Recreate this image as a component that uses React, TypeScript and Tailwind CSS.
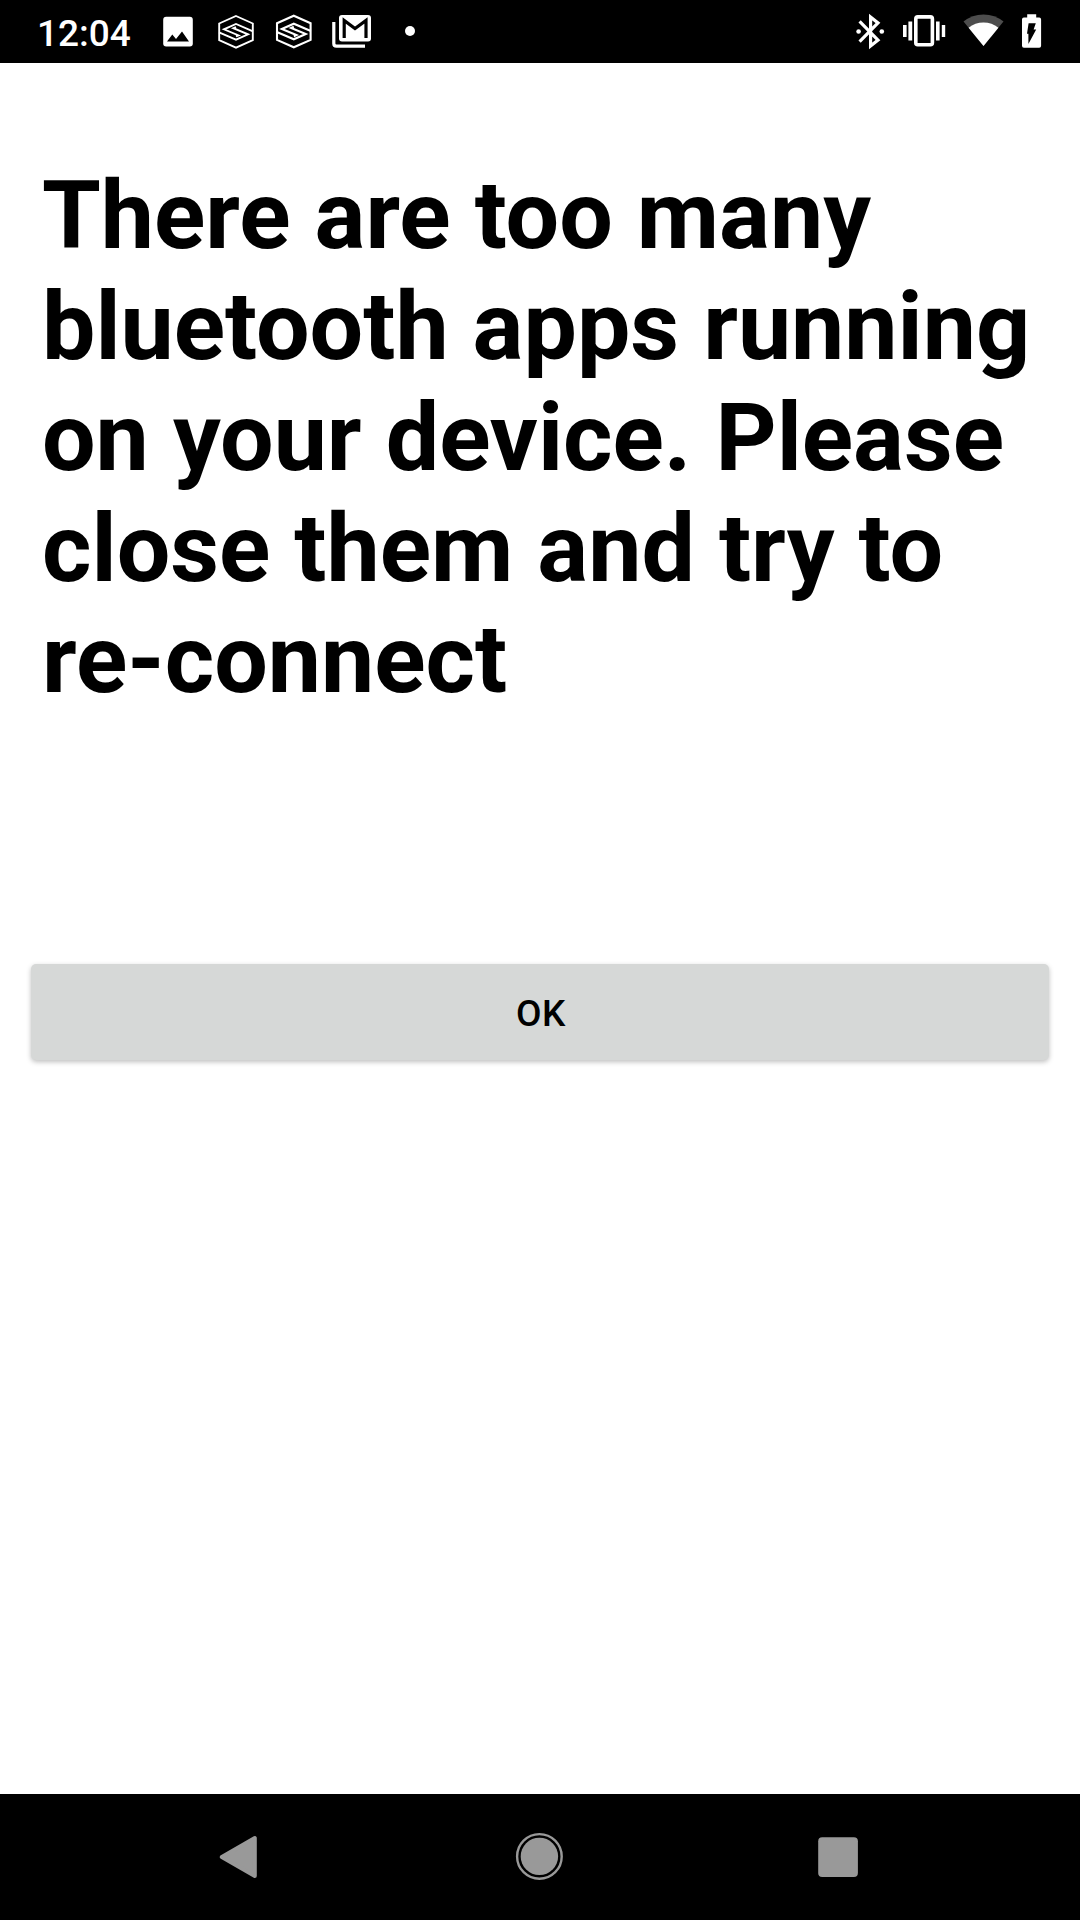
import React from "react";

function HexLogo({ strokeWidth }: { strokeWidth: number }) {
  return (
    <g fill="none" stroke="#fff" strokeWidth={strokeWidth} strokeLinejoin="miter">
      <path d="M18 1.4 34.8 8.9V25.6L18 33 1.2 25.6V8.9Z" />
      <path d="M35 16.7 18 9.4 6 14.7 20.6 20.8 18 21.9M1 17.7 18 25 30 19.7 15.4 13.6 18 12.5" />
    </g>
  );
}

function StatusBar() {
  return (
    <header className="flex h-[63px] shrink-0 items-center bg-black text-white">
      <div className="w-[158px] pl-[37px] pt-[4px] text-[37px] font-medium leading-none">12:04</div>
      <svg className="h-[63px] w-[282px]" viewBox="158 0 282 63">
        <rect x="163.2" y="16.8" width="29.6" height="29.6" rx="3" fill="#fff" />
        <path d="M167 41.5 172.3 34.4 176 39 182 31.6 189 41.5Z" fill="#000" />
        <g transform="translate(218 14.6)">
          <HexLogo strokeWidth={1.9} />
        </g>
        <g transform="translate(275.8 14.3)">
          <HexLogo strokeWidth={2.1} />
        </g>
        <path d="M333.8 22V43.5Q333.8 46.2 336.5 46.2H365" fill="none" stroke="#fff" strokeWidth="3.2" />
        <rect x="339" y="15" width="32" height="26.6" rx="3" fill="#fff" />
        <path d="M344.2 38V20.5L355 28.5 366 20.5V38" fill="none" stroke="#000" strokeWidth="3.2" />
        <circle cx="410" cy="31" r="5" fill="#fff" />
      </svg>
      <svg className="ml-auto h-[63px] w-[240px]" viewBox="840 0 240 63">
        <path d="M859.6 21.4 878 40 870.6 46V17L878 23 859.6 41.6" fill="none" stroke="#fff" strokeWidth="3.2" />
        <circle cx="858.6" cy="31.5" r="2.3" fill="#fff" />
        <circle cx="881.8" cy="31.5" r="2.3" fill="#fff" />
        <rect x="915.8" y="16.9" width="16.6" height="27.8" rx="2" fill="none" stroke="#fff" strokeWidth="3.6" />
        <path d="M903 25h3.6v12H903zM908.4 21.6h3.8v18.8h-3.8zM936 21.6h3.6v18.8H936zM941.8 25h3.4v12h-3.4z" fill="#fff" />
        <path d="M983.5 46 963.5 21.6Q972 14.4 983.5 14.4T1003.5 21.6Z" fill="#4d4d4d" />
        <path d="M983.5 46 968.6 27.8Q975 22.6 983.5 22.6T998.4 27.8Z" fill="#fff" />
        <path d="M1027.2 14.2h9v3.3h3q1.9 0 1.9 1.9v26.4q0 1.9-1.9 1.9h-15.3q-1.9 0-1.9-1.9V19.4q0-1.9 1.9-1.9h3.3z" fill="#fff" />
        <path d="M1028.6 23.2h7.2l-2.2 6.4h2.6l-7.8 14.4V33.8h-1.4z" fill="#000" />
      </svg>
    </header>
  );
}

function NavigationBar() {
  return (
    <nav className="flex h-[126px] shrink-0 items-center bg-black">
      <svg className="h-[126px] w-full" viewBox="0 1794 1080 126">
        <path d="M221.8 1857 254.8 1838V1876Z" fill="#999" stroke="#999" strokeWidth="4" strokeLinejoin="round" />
        <circle cx="539.4" cy="1856.4" r="22.3" fill="none" stroke="#999" strokeWidth="2.4" />
        <circle cx="539.4" cy="1856.4" r="18.7" fill="#999" />
        <rect x="818.2" y="1837.2" width="39.7" height="39.7" rx="4" fill="#999" />
      </svg>
    </nav>
  );
}

export default function App() {
  return (
    <div className="flex h-[1920px] w-[1080px] flex-col bg-white font-[Roboto,sans-serif] text-black">
      <StatusBar />
      <main className="flex flex-1 flex-col px-[31px]">
        <h1 className="ml-[11px] mt-[97px] whitespace-nowrap text-[95px] font-bold leading-[111px] [word-spacing:0.4px]">
          There are too many
          <br />
          bluetooth apps running
          <br />
          on your device. Please
          <br />
          close them and try to
          <br />
          re-connect
        </h1>
        <button className="mt-[249px] flex h-[96px] w-full items-center justify-center rounded-[5px] bg-[#d6d8d7] pl-[2px] pt-[2px] text-[37px] font-medium leading-none tracking-[0.5px] shadow-[0_2px_5px_rgba(0,0,0,0.25)]">
          OK
        </button>
      </main>
      <NavigationBar />
    </div>
  );
}
